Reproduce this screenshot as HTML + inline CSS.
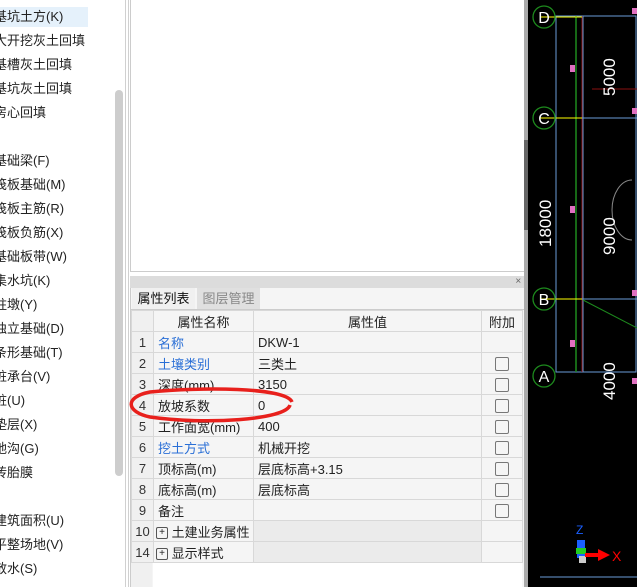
<!DOCTYPE html>
<html><head><meta charset="utf-8"><style>
body{margin:0;width:637px;height:587px;overflow:hidden;background:#fff;position:relative;font-family:"Liberation Sans","Noto Sans CJK SC",sans-serif;font-size:13px;color:#222}
.li{position:absolute;left:-6px;height:20px;line-height:20px;white-space:nowrap}
.abs{position:absolute}
table{border-collapse:collapse;position:absolute;left:131px;top:310px;width:391px;table-layout:fixed;font-size:13px}
td{border:1px solid #d8d8d8;height:20px;padding:0 0 0 4px;white-space:nowrap;overflow:hidden}
td.n{background:#f0f0f0;text-align:center;padding:0;color:#333}
.b{color:#2a6fd6}
.cb{display:inline-block;width:12px;height:12px;border:1px solid #777;border-radius:2px;vertical-align:middle}
.pb{display:inline-block;width:10px;height:10px;border:1px solid #555;border-radius:2px;vertical-align:middle;font-size:10px;line-height:10px;text-align:center}
.g{background:#ebebeb}
</style></head><body>
<div class="abs" style="left:0;top:7px;width:88px;height:20px;background:#e5f1fb"></div>
<div class="li" style="top:7px">基坑土方(K)</div>
<div class="li" style="top:31px">大开挖灰土回填</div>
<div class="li" style="top:55px">基槽灰土回填</div>
<div class="li" style="top:79px">基坑灰土回填</div>
<div class="li" style="top:103px">房心回填</div>
<div class="li" style="top:151px">基础梁(F)</div>
<div class="li" style="top:175px">筏板基础(M)</div>
<div class="li" style="top:199px">筏板主筋(R)</div>
<div class="li" style="top:223px">筏板负筋(X)</div>
<div class="li" style="top:247px">基础板带(W)</div>
<div class="li" style="top:271px">集水坑(K)</div>
<div class="li" style="top:295px">柱墩(Y)</div>
<div class="li" style="top:319px">独立基础(D)</div>
<div class="li" style="top:343px">条形基础(T)</div>
<div class="li" style="top:367px">桩承台(V)</div>
<div class="li" style="top:391px">桩(U)</div>
<div class="li" style="top:415px">垫层(X)</div>
<div class="li" style="top:439px">地沟(G)</div>
<div class="li" style="top:463px">砖胎膜</div>
<div class="li" style="top:511px">建筑面积(U)</div>
<div class="li" style="top:535px">平整场地(V)</div>
<div class="li" style="top:559px">散水(S)</div>
<div class="abs" style="left:115px;top:90px;width:8px;height:386px;background:#cdcdcd;border-radius:4px"></div>
<div class="abs" style="left:125px;top:0;width:1px;height:587px;background:#d0d0d0"></div>
<div class="abs" style="left:128px;top:0;width:1px;height:587px;background:#d0d0d0"></div>
<div class="abs" style="left:130px;top:-1px;width:393px;height:271px;border:1px solid #ccc;background:#fff"></div>
<div class="abs" style="left:130px;top:276px;width:394px;height:311px;background:#f5f5f5;border-left:1px solid #ccc"></div>
<div class="abs" style="left:130px;top:276px;width:394px;height:12px;background:#dcdcdc;font-size:10px;line-height:12px;text-align:right;color:#666">×&nbsp;</div>
<div class="abs" style="left:132px;top:288px;width:63px;height:21px;line-height:21px;text-align:center;background:#f0f0f0;color:#111">属性列表</div>
<div class="abs" style="left:197px;top:288px;width:63px;height:21px;line-height:21px;text-align:center;background:#e0e0e0;color:#888">图层管理</div>
<div class="abs" style="left:130px;top:309px;width:394px;height:1px;background:#ccc"></div>
<div class="abs" style="left:131px;top:330px;width:21px;height:257px;background:#f0f0f0"></div>
<div class="abs" style="left:153px;top:562px;width:369px;height:25px;background:#fff"></div>
<table>
<colgroup><col style="width:22px"><col style="width:100px"><col style="width:228px"><col style="width:41px"></colgroup>
<tr><td class="n"></td><td style="text-align:center;padding:0">属性名称</td><td style="text-align:center;padding:0">属性值</td><td style="text-align:center;padding:0">附加</td></tr>
<tr><td class="n">1</td><td class="b">名称</td><td>DKW-1</td><td></td></tr>
<tr><td class="n">2</td><td class="b">土壤类别</td><td>三类土</td><td style="text-align:center;padding:0"><span class="cb"></span></td></tr>
<tr><td class="n">3</td><td>深度(mm)</td><td>3150</td><td style="text-align:center;padding:0"><span class="cb"></span></td></tr>
<tr><td class="n">4</td><td>放坡系数</td><td>0</td><td style="text-align:center;padding:0"><span class="cb"></span></td></tr>
<tr><td class="n">5</td><td>工作面宽(mm)</td><td>400</td><td style="text-align:center;padding:0"><span class="cb"></span></td></tr>
<tr><td class="n">6</td><td class="b">挖土方式</td><td>机械开挖</td><td style="text-align:center;padding:0"><span class="cb"></span></td></tr>
<tr><td class="n">7</td><td>顶标高(m)</td><td>层底标高+3.15</td><td style="text-align:center;padding:0"><span class="cb"></span></td></tr>
<tr><td class="n">8</td><td>底标高(m)</td><td>层底标高</td><td style="text-align:center;padding:0"><span class="cb"></span></td></tr>
<tr><td class="n">9</td><td>备注</td><td></td><td style="text-align:center;padding:0"><span class="cb"></span></td></tr>
<tr><td class="n">10</td><td style="padding-left:2px"><span class="pb">+</span> 土建业务属性</td><td class="g"></td><td></td></tr>
<tr><td class="n">14</td><td style="padding-left:2px"><span class="pb">+</span> 显示样式</td><td class="g"></td><td></td></tr>
</table>
<svg class="abs" style="left:0;top:0" width="637" height="587">
<path d="M292,402 C286,387 200,387 150,392 C124,397 126,412 150,417 C205,425 286,420 290,405" fill="none" stroke="#e8201c" stroke-width="3.5"/>
<rect x="524" y="0" width="4" height="587" fill="#aaa"/>
<rect x="524" y="140" width="4" height="90" fill="#666"/>
<rect x="528" y="0" width="109" height="587" fill="#000"/>
<g fill="none">
<rect x="556" y="16" width="80" height="356" stroke="#6a9bd8"/>
<line x1="576" y1="16" x2="576" y2="372" stroke="#1d8a1d" stroke-width="1.5"/>
<line x1="582" y1="16" x2="582" y2="372" stroke="#8a1010"/>
<line x1="583" y1="16" x2="583" y2="372" stroke="#6a9bd8"/>
<line x1="540" y1="17" x2="582" y2="17" stroke="#ff0"/>
<line x1="540" y1="118" x2="582" y2="118" stroke="#ff0"/>
<line x1="540" y1="299" x2="582" y2="299" stroke="#ff0"/>
<line x1="582" y1="118" x2="637" y2="118" stroke="#6a9bd8"/>
<line x1="582" y1="299" x2="637" y2="299" stroke="#6a9bd8"/>
<line x1="583" y1="300" x2="637" y2="328" stroke="#1d8a1d"/>
<line x1="592" y1="89" x2="637" y2="89" stroke="#8a1010"/>
<path d="M632,180 a20,30 0 0 0 0,60" stroke="#888"/>
<line x1="540" y1="577" x2="637" y2="577" stroke="#6a9bd8"/>
</g>
<g stroke="#1d8a1d" stroke-width="1.3" fill="none">
<circle cx="544" cy="17" r="11"/><circle cx="544" cy="118" r="11"/><circle cx="544" cy="299" r="11"/><circle cx="544" cy="376" r="11"/>
</g>
<g fill="#fff" font-family="Liberation Sans" font-size="16" text-anchor="middle">
<text x="544" y="23">D</text><text x="544" y="124">C</text><text x="544" y="305">B</text><text x="544" y="382">A</text>
</g>
<g fill="#fff" font-family="Liberation Sans" font-size="17">
<text transform="translate(615,96) rotate(-90)">5000</text>
<text transform="translate(615,255) rotate(-90)">9000</text>
<text transform="translate(615,400) rotate(-90)">4000</text>
<text transform="translate(551,247) rotate(-90)">18000</text>
</g>
<g fill="#e070c0"><rect x="570" y="65" width="5" height="7"/><rect x="570" y="206" width="5" height="7"/><rect x="570" y="340" width="5" height="7"/><rect x="632" y="8" width="5" height="6"/><rect x="632" y="108" width="5" height="6"/><rect x="632" y="290" width="5" height="6"/><rect x="632" y="378" width="5" height="6"/></g>
<rect x="577" y="540" width="8" height="18" fill="#1a5fff"/>
<rect x="576" y="548" width="10" height="6" fill="#2c2"/>
<rect x="579" y="556" width="7" height="7" fill="#ccc"/>
<rect x="585" y="553" width="14" height="4" fill="#f00"/><path d="M598,549 L610,555 L598,561Z" fill="#f00"/>
<text x="612" y="561" fill="#f00" font-family="Liberation Sans" font-size="14">X</text>
<text x="576" y="534" fill="#1a5fff" font-family="Liberation Sans" font-size="12">Z</text>
</svg>
</body></html>
